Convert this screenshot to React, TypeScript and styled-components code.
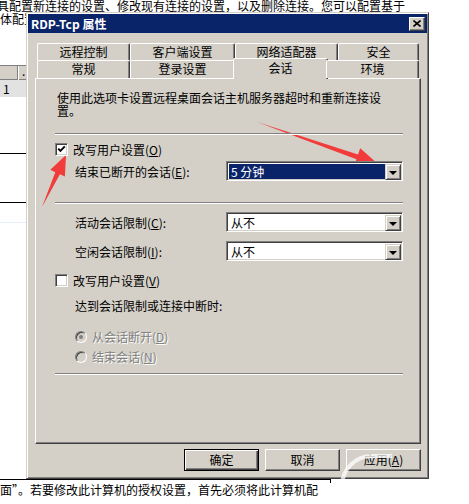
import React from 'react'
import styled, { createGlobalStyle, css } from 'styled-components'

const FACE = '#d4d0c8'
const SHADOW = '#808080'
const DARK = '#404040'
const NAVY = '#0a246a'

const GlobalStyle = createGlobalStyle`
  html, body {
    margin: 0;
    padding: 0;
    background: #fff;
  }
  body {
    font-family: "Noto Sans CJK SC", "Noto Sans", sans-serif;
    font-size: 12px;
    color: #000;
  }
`

const Page = styled.div`
  position: relative;
  width: 469px;
  height: 504px;
  overflow: hidden;
  background: #fff;
`

/* ---------- document behind the dialog ---------- */

const Doc = styled.div`
  display: flex;
  flex-direction: column;
  height: 100%;
`

const DocLine = styled.div<{ $shift?: number; $clip?: number }>`
  margin-left: ${p => p.$shift ?? 0}px;
  height: 12px;
  line-height: 12px;
  white-space: nowrap;
  overflow: hidden;
  ${p =>
    p.$clip &&
    css`
      width: ${p.$clip}px;
    `}
  & + & {
    margin-top: 1px;
  }
`

const SideTable = styled.div`
  width: 27px;
  margin-top: 40px;
`

const SideHead = styled.div`
  display: flex;
  height: 15px;
  background: ${FACE};
  border-top: 1px solid ${SHADOW};
  box-sizing: border-box;
  box-shadow: inset 0 -1px ${SHADOW};
`

const SideHeadCell = styled.div<{ $w: number }>`
  flex: none;
  width: ${p => p.$w}px;
  border-right: 1px solid ${SHADOW};
  box-shadow: 1px 0 #fff;
  line-height: 10px;
  padding-left: 4px;
  box-sizing: border-box;
`

const SideRow = styled.div`
  height: 17px;
  line-height: 17px;
  padding-left: 3px;
  background: #e2e2e2;
`

const SideRule = styled.div<{ $gap: number; $color?: string }>`
  margin-top: ${p => p.$gap}px;
  height: 1px;
  background: ${p => p.$color ?? '#000'};
`

const DocBottom = styled.div`
  margin-top: auto;
  padding-bottom: 7px;
`

const BottomRule = styled.div`
  box-sizing: border-box;
  width: 331px;
  height: 4px;
  border-top: 1px solid #000;
  border-right: 1px solid #000;
`

const BottomText = styled.div`
  height: 14px;
  line-height: 14px;
  white-space: nowrap;
`

/* ---------- dialog window ---------- */

const Dialog = styled.div`
  position: absolute;
  left: 26px;
  top: 12px;
  width: 403px;
  height: 467px;
  box-sizing: border-box;
  padding: 1px;
  background: ${FACE};
  border: 1px solid;
  border-color: ${FACE} ${DARK} ${DARK} ${FACE};
  box-shadow: inset 1px 1px #fff, inset -1px -1px ${SHADOW};
  display: flex;
  flex-direction: column;
`

const TitleBar = styled.div`
  height: 19px;
  background: ${NAVY};
  display: flex;
  align-items: center;
  padding: 0 2px 0 3px;
  color: #fff;
  font-weight: bold;
  line-height: 12px;
`

const Title = styled.span`
  flex: 1;
`

const CloseBtn = styled.div`
  box-sizing: border-box;
  width: 16px;
  height: 14px;
  background: ${FACE};
  border: 1px solid;
  border-color: #fff ${DARK} ${DARK} #fff;
  box-shadow: inset -1px -1px ${SHADOW};
  display: flex;
  align-items: center;
  justify-content: center;
`

const Body = styled.div`
  padding: 10px 6px 0 7px;
  display: flex;
  flex-direction: column;
`

const TabStrip = styled.div`
  padding: 0 2px;
  display: flex;
  flex-direction: column;
`

const TabRow = styled.div<{ $front?: boolean }>`
  display: flex;
  align-items: flex-end;
  position: relative;
  ${p =>
    p.$front
      ? css`
          margin-top: -2px;
          z-index: 2;
        `
      : css`
          height: 17px;
        `}
`

const Tab = styled.div<{ $w: number; $h: number; $active?: boolean }>`
  box-sizing: border-box;
  flex: none;
  width: ${p => p.$w}px;
  height: ${p => p.$h}px;
  background: ${FACE};
  border-top: 1px solid #fff;
  border-left: 1px solid #fff;
  border-right: 1px solid ${DARK};
  border-radius: 2px 2px 0 0;
  box-shadow: inset -1px 0 ${SHADOW};
  display: flex;
  align-items: center;
  justify-content: center;
  line-height: 12px;
  padding-bottom: 1px;
  ${p =>
    p.$active &&
    css`
      width: ${p.$w + 4}px;
      height: ${p.$h + 3}px;
      margin: 0 -2px -1px;
      padding-bottom: 2px;
    `}
`

const Panel = styled.div`
  position: relative;
  z-index: 1;
  box-sizing: border-box;
  height: 366px;
  padding: 12px 17px 0 19px;
  border: 1px solid;
  border-color: #fff ${DARK} ${DARK} #fff;
  box-shadow: inset -1px -1px ${SHADOW};
  display: flex;
  flex-direction: column;
`

const Desc = styled.p`
  margin: 0 0 0 2px;
  width: 330px;
  line-height: 13px;
`

const Rule = styled.div<{ $gap: number }>`
  margin-top: ${p => p.$gap}px;
  border-top: 1px solid ${SHADOW};
  border-bottom: 1px solid #fff;
`

const OptionRow = styled.div<{ $gap: number; $indent?: number; $disabled?: boolean }>`
  display: flex;
  align-items: center;
  gap: 5px;
  height: 13px;
  line-height: 13px;
  margin-top: ${p => p.$gap}px;
  padding-left: ${p => p.$indent ?? 0}px;
  ${p =>
    p.$disabled &&
    css`
      color: ${SHADOW};
      text-shadow: 1px 1px 0 #fff;
    `}
`

const CheckBox = styled.span`
  flex: none;
  box-sizing: border-box;
  width: 13px;
  height: 13px;
  background: #fff;
  border: 1px solid;
  border-color: ${SHADOW} #fff #fff ${SHADOW};
  box-shadow: inset 1px 1px ${DARK}, inset -1px -1px ${FACE};
  display: flex;
  align-items: center;
  justify-content: center;
`

const Radio = styled.span<{ $on?: boolean; $disabled?: boolean }>`
  flex: none;
  box-sizing: border-box;
  width: 12px;
  height: 12px;
  border-radius: 50%;
  background: ${p => (p.$disabled ? FACE : '#fff')};
  border: 1px solid;
  border-color: ${SHADOW} #fff #fff ${SHADOW};
  box-shadow: inset 1px 1px ${DARK}, inset -1px -1px ${FACE};
  display: flex;
  align-items: center;
  justify-content: center;
  &::after {
    content: '';
    display: ${p => (p.$on ? 'block' : 'none')};
    width: 4px;
    height: 4px;
    border-radius: 50%;
    background: ${p => (p.$disabled ? SHADOW : '#000')};
  }
`

const FieldRow = styled.div<{ $gap: number }>`
  display: flex;
  align-items: center;
  height: 20px;
  margin-top: ${p => p.$gap}px;
  padding-left: 20px;
`

const FieldLabel = styled.span`
  flex: 1;
  line-height: 13px;
`

const PlainText = styled.div<{ $gap: number }>`
  margin-top: ${p => p.$gap}px;
  padding-left: 20px;
  height: 13px;
  line-height: 13px;
`

const Select = styled.div`
  flex: none;
  box-sizing: border-box;
  width: 177px;
  height: 20px;
  padding: 1px;
  background: #fff;
  border: 1px solid;
  border-color: ${SHADOW} #fff #fff ${SHADOW};
  box-shadow: inset 1px 1px ${DARK}, inset -1px -1px ${FACE};
  display: flex;
  align-items: stretch;
`

const SelectValue = styled.div<{ $selected?: boolean }>`
  flex: 1;
  margin: 1px 0 0 1px;
  padding-left: 2px;
  line-height: 16px;
  ${p =>
    p.$selected &&
    css`
      background: ${NAVY};
      color: #fff;
    `}
`

const SelectButton = styled.div`
  flex: none;
  box-sizing: border-box;
  width: 16px;
  height: 16px;
  margin-top: 1px;
  background: ${FACE};
  border: 1px solid;
  border-color: ${FACE} ${DARK} ${DARK} ${FACE};
  box-shadow: inset 1px 1px #fff, inset -1px -1px ${SHADOW};
  display: flex;
  align-items: center;
  justify-content: center;
  &::after {
    content: '';
    width: 0;
    height: 0;
    border-left: 4px solid transparent;
    border-right: 4px solid transparent;
    border-top: 4px solid #000;
    margin-top: 1px;
  }
`

const ButtonRow = styled.div`
  margin-top: 5px;
  display: flex;
  justify-content: flex-end;
  gap: 6px;
`

const Button = styled.div<{ $default?: boolean }>`
  box-sizing: border-box;
  width: 75px;
  height: 22px;
  background: ${FACE};
  display: flex;
  align-items: center;
  justify-content: center;
  line-height: 12px;
  border: 1px solid;
  ${p =>
    p.$default
      ? css`
          border-color: #000;
          box-shadow: inset 1px 1px #fff, inset -1px -1px ${DARK}, inset -2px -2px ${SHADOW};
        `
      : css`
          border-color: #fff ${DARK} ${DARK} #fff;
          box-shadow: inset -1px -1px ${SHADOW};
        `}
`

const Mn = styled.u`
  text-underline-offset: 1px;
`

const Overlay = styled.svg`
  position: absolute;
  left: 0;
  top: 0;
  pointer-events: none;
`

const row1 = [
  { label: '远程控制', w: 93 },
  { label: '客户端设置', w: 105 },
  { label: '网络适配器', w: 103 },
  { label: '安全', w: 81 },
]

const row2 = [
  { label: '常规', w: 93 },
  { label: '登录设置', w: 105 },
  { label: '会话', w: 91, active: true },
  { label: '环境', w: 93 },
]

const CheckMark = () => (
  <svg width="9" height="9" viewBox="0 0 9 9">
    <path d="M1.2 3.6 L3.4 5.9 L7.8 1.4" fill="none" stroke="#000" strokeWidth="1.9" />
  </svg>
)

const App = () => {
  return (
    <Page>
      <GlobalStyle />
      <Doc>
        <div>
          <DocLine $shift={-3}>具配置新连接的设置、修改现有连接的设置，以及删除连接。您可以配置基于</DocLine>
          <DocLine $clip={26}>体配置</DocLine>
        </div>
        <SideTable>
          <SideHead>
            <SideHeadCell $w={18} />
            <SideHeadCell $w={9}>.</SideHeadCell>
          </SideHead>
          <SideRow>1</SideRow>
          <SideRule $gap={56} />
          <SideRule $gap={48} />
          <SideRule $gap={19} $color="#e6ecf8" />
        </SideTable>
        <DocBottom>
          <BottomRule />
          <BottomText>面”。若要修改此计算机的授权设置，首先必须将此计算机配</BottomText>
        </DocBottom>
      </Doc>

      <Dialog>
        <TitleBar>
          <Title>RDP-Tcp 属性</Title>
          <CloseBtn>
            <svg width="8" height="7" viewBox="0 0 8 7">
              <path d="M0.5 0.5 L7.5 6.5 M7.5 0.5 L0.5 6.5" stroke="#000" strokeWidth="1.6" />
            </svg>
          </CloseBtn>
        </TitleBar>
        <Body>
          <TabStrip>
            <TabRow>
              {row1.map(t => (
                <Tab key={t.label} $w={t.w} $h={17}>
                  {t.label}
                </Tab>
              ))}
            </TabRow>
            <TabRow $front>
              {row2.map(t => (
                <Tab key={t.label} $w={t.w} $h={18} $active={t.active}>
                  {t.label}
                </Tab>
              ))}
            </TabRow>
          </TabStrip>
          <Panel>
            <Desc>使用此选项卡设置远程桌面会话主机服务器超时和重新连接设置。</Desc>
            <Rule $gap={16} />
            <OptionRow $gap={8}>
              <CheckBox>
                <CheckMark />
              </CheckBox>
              <span>
                改写用户设置(<Mn>O</Mn>)
              </span>
            </OptionRow>
            <FieldRow $gap={5}>
              <FieldLabel>
                结束已断开的会话(<Mn>E</Mn>):
              </FieldLabel>
              <Select>
                <SelectValue $selected>5 分钟</SelectValue>
                <SelectButton />
              </Select>
            </FieldRow>
            <Rule $gap={21} />
            <FieldRow $gap={8}>
              <FieldLabel>
                活动会话限制(<Mn>C</Mn>):
              </FieldLabel>
              <Select>
                <SelectValue>从不</SelectValue>
                <SelectButton />
              </Select>
            </FieldRow>
            <FieldRow $gap={9}>
              <FieldLabel>
                空闲会话限制(<Mn>I</Mn>):
              </FieldLabel>
              <Select>
                <SelectValue>从不</SelectValue>
                <SelectButton />
              </Select>
            </FieldRow>
            <OptionRow $gap={13}>
              <CheckBox />
              <span>
                改写用户设置(<Mn>V</Mn>)
              </span>
            </OptionRow>
            <PlainText $gap={12}>达到会话限制或连接中断时:</PlainText>
            <OptionRow $gap={18} $indent={20} $disabled>
              <Radio $on $disabled />
              <span>
                从会话断开(<Mn>D</Mn>)
              </span>
            </OptionRow>
            <OptionRow $gap={7} $indent={20} $disabled>
              <Radio $disabled />
              <span>
                结束会话(<Mn>N</Mn>)
              </span>
            </OptionRow>
            <Rule $gap={10} />
          </Panel>
          <ButtonRow>
            <Button $default>确定</Button>
            <Button>取消</Button>
            <Button>
              应用(<Mn>A</Mn>)
            </Button>
          </ButtonRow>
        </Body>
      </Dialog>

      <Overlay width="469" height="504" viewBox="0 0 469 504">
        <polygon
          points="42,207 59.9,174.2 64.9,176.6 66,155 50.3,169.8 55.3,172.2"
          fill="#f23b3b"
        />
        <polygon
          points="257,122 358,154.4 360.2,148.3 378,164 354.2,165.3 356.4,159.2"
          fill="#f23b3b"
        />
        <path
          d="M342 486 A 30 30 0 0 1 372 456 L 392 456"
          fill="none"
          stroke="#fff"
          strokeOpacity="0.75"
          strokeWidth="4"
        />
      </Overlay>
    </Page>
  )
}

export default React.memo(App)
